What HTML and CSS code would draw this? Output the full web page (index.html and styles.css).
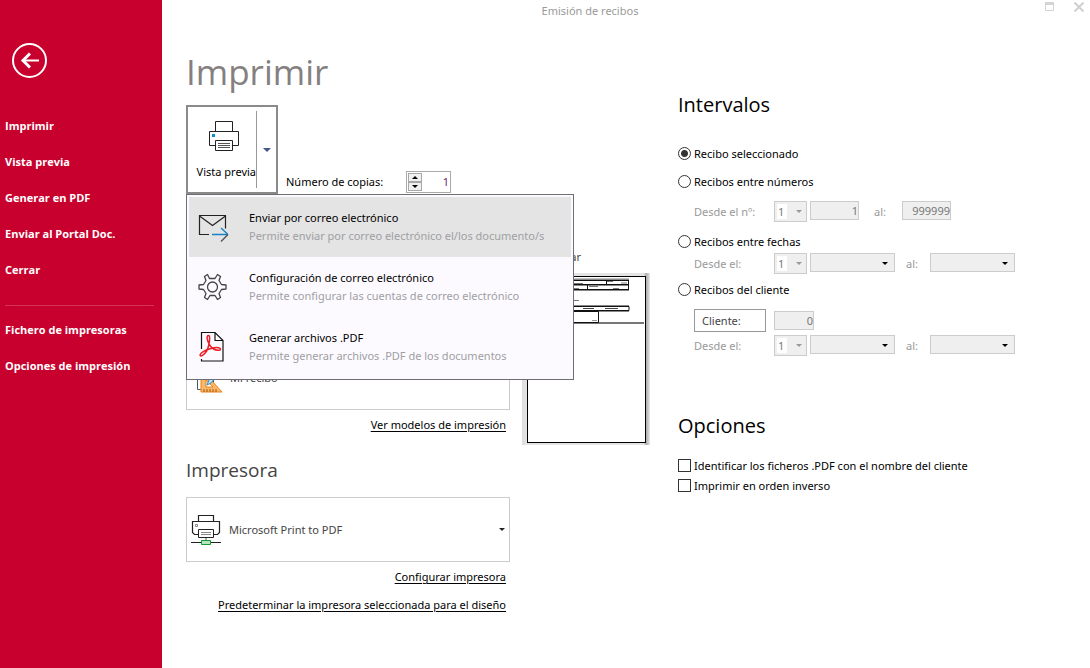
FILE: index.html
```html
<!DOCTYPE html>
<html lang="es">
<head>
<meta charset="utf-8">
<title>Emisión de recibos</title>
<link rel="stylesheet" href="styles.css">
</head>
<body>
<div class="app">
  <nav class="sidebar">
    <button class="back" type="button" aria-label="Volver">
      <svg width="36" height="36" viewBox="0 0 36 36" fill="none" stroke="#fff"><circle cx="17.500" cy="17.500" r="16.500" stroke-width="2"/><path d="M10 17.500H27" stroke-width="2"/><path d="M18 10.500L11 17.500L18 24.500" stroke-width="3"/></svg>
    </button>
    <a class="nav-link" href="#">Imprimir</a>
    <a class="nav-link" href="#">Vista previa</a>
    <a class="nav-link" href="#">Generar en PDF</a>
    <a class="nav-link" href="#">Enviar al Portal Doc.</a>
    <a class="nav-link" href="#">Cerrar</a>
    <hr class="nav-rule">
    <a class="nav-link" href="#">Fichero de impresoras</a>
    <a class="nav-link" href="#">Opciones de impresión</a>
  </nav>

  <div class="window">
    <header class="titlebar">
      <span class="window-title">Emisión de recibos</span>
      <div class="window-buttons">
        <button class="window-button" type="button" aria-label="Maximizar"><svg width="10" height="10" viewBox="0 0 10 10"><path d="M.5 .5h8v8h-8z" fill="none" stroke="#d4d4d4"/><path d="M0 0h9v3H0z" fill="#d4d4d4"/></svg></button>
        <button class="window-button" type="button" aria-label="Cerrar ventana"><svg width="10" height="10" viewBox="0 0 10 10"><path d="M.5 .5l9 9M9.500 .5l-9 9" stroke="#d0d0d0" stroke-width="2"/></svg></button>
      </div>
    </header>

    <main class="content">
      <section class="print">
        <h1 class="page-title">Imprimir</h1>
        <div class="toolbar">
          <div class="split">
            <button class="split-main" type="button">
              <svg width="30" height="31" viewBox="0 0 30 31" fill="none" stroke="#222"><path d="M6.500 10.500V.5h17v10M6.500 24.500H.5v-14h29v14h-6"/><path d="M6.500 19.500h17v10h-17z"/><path d="M9 22.500h12M9 24.500h12M9 26.500h12" stroke="#555"/><path d="M3 13h3v3H3z" fill="#0a8fd0" stroke="none"/></svg>
              <span>Vista previa</span>
            </button>
            <button class="split-toggle" type="button" aria-label="Más opciones"><svg width="8" height="4" viewBox="0 0 8 4"><path d="M0 0h8L4 4z" fill="#44558a"/></svg></button>
          </div>
          <label class="copies-label" for="copies">Número de copias:</label>
          <div class="spinner">
            <div class="spinner-buttons">
              <button class="step" type="button" aria-label="Más"><svg width="6" height="3" viewBox="0 0 6 3"><path d="M3 0l3 3H0z"/></svg></button>
              <button class="step" type="button" aria-label="Menos"><svg width="6" height="3" viewBox="0 0 6 3"><path d="M3 3l3-3H0z"/></svg></button>
            </div>
            <input class="spinner-input" id="copies" type="text" value="1">
          </div>

          <div class="menu" role="menu">
            <button class="menu-item active" type="button" role="menuitem">
              <svg width="32" height="32" viewBox="0 -3 32 32" fill="none" stroke="#222"><path d="M11 20.500H1.500v-19h26v13" stroke-width="1.200"/><path d="M1.500 2l13 9.500L27.500 2" stroke-width="1.200"/><path d="M14 20.500h16M23 14l6.500 6" stroke="#1583c4" stroke-width="1.400"/><path d="M30 20.500l-7 7" stroke="#555" stroke-width="1.400"/></svg>
              <span class="menu-text"><span class="menu-title">Enviar por correo electrónico</span><span class="menu-note">Permite enviar por correo electrónico el/los documento/s</span></span>
            </button>
            <button class="menu-item" type="button" role="menuitem">
              <svg width="32" height="32" viewBox="0 0 32 32" fill="none" stroke="#444" stroke-width="1.300"><circle cx="14.500" cy="16" r="5"/><path d="M11.500 7.500L9.500 3.500L6.500 5.500L8 9.500L5.500 13.500L1 14V18L5.500 18.500L8 22.500L6.500 26.500L9.500 28.500L12 24.500H17L19.500 28.500L22.500 26.500L21 22.500L23.500 18.500L28 18V14L23.500 13.500L21 9.500L22.500 5.500L19.500 3.500L17 7.500Z" stroke-linejoin="round"/></svg>
              <span class="menu-text"><span class="menu-title">Configuración de correo electrónico</span><span class="menu-note">Permite configurar las cuentas de correo electrónico</span></span>
            </button>
            <button class="menu-item" type="button" role="menuitem">
              <svg width="32" height="32" viewBox="0 0 32 32" fill="none" stroke="#111"><path d="M3.500 18V1.500h13.500l8 8v20.500H3.500v-2M17 1.500v8h8" stroke-width="1.200"/><path d="M10.500 4.500C8 4.500 9 10 12 14.500C15 19 19 19.500 22 19C24 17 19 15.500 13 17.500C7 19 2 22 2 24C2.500 26.500 6 24 9 19.500C11 15 13 4.500 10.500 4.500Z" stroke="#ee1c25" stroke-width="1.500"/></svg>
              <span class="menu-text"><span class="menu-title">Generar archivos .PDF</span><span class="menu-note">Permite generar archivos .PDF de los documentos</span></span>
            </button>
          </div>
        </div>

        <button class="picker model" type="button">
          <svg width="26" height="30" viewBox="0 0 26 30"><path d="M.5 .5h16v26H.5z" fill="#fff" stroke="#555"/><path d="M4 6v23h21z" fill="#f9b86a" stroke="#e8811c"/><path d="M9 17v7h7z" fill="#fff" stroke="#e8811c"/><path d="M7 29v-3M10 29v-3M13 29v-3M16 29v-3M19 29v-3" stroke="#a85a10"/><path d="M10 22l2-5 7-9 3 2-8 10z" fill="#bfe3f5" stroke="#2a8cc8"/></svg>
          <span>Mi recibo</span>
        </button>
        <a class="link models-link" href="#">Ver modelos de impresión</a>

        <h2 class="section-title printer-title">Impresora</h2>
        <button class="picker printer" type="button">
          <svg width="30" height="30" viewBox="0 0 30 30" fill="none" stroke="#222"><path d="M7.500 6.500v-6h15v6M7.500 19.500H3.500l-2-2v-11h27v11l-2 2h-4" stroke-width="1.200"/><path d="M7.500 14.500h15v8h-15z"/><path d="M10 17.500h10M10 19.500h10M4.500 9.500h2v2h-2z" stroke="#888"/><path d="M15 23v2" stroke="#aaa" stroke-width="2"/><path d="M0 27.500h30"/><path d="M10.500 25.500h9v4h-9z" fill="#b9e3bd" stroke="#109a38"/></svg>
          <span>Microsoft Print to PDF</span>
          <svg class="picker-arrow" width="6" height="3" viewBox="0 0 6 3"><path d="M0 0h6L3 3z" fill="#222"/></svg>
        </button>
        <a class="link" href="#">Configurar impresora</a>
        <a class="link" href="#">Predeterminar la impresora seleccionada para el diseño</a>
      </section>

      <section class="preview">
        <span class="preview-label">Visualizar</span>
        <div class="sheet-frame">
          <div class="sheet">
            <svg width="117" height="50" viewBox="0 0 117 50" fill="none">
              <path d="M4 2.500h97M4 8h97M4 13h97M4 29h97M4 34h97" stroke="#888" stroke-width="2"/>
              <path d="M4 3.500h97M4 7.500h97M4 12.500h97M4 29.500h97v4H4zM100.500 3v10M78.500 3v5M59.500 8v5" stroke="#111"/>
              <path d="M46 6.500h9M93 6h6M79 4.500h6M61 9.500h9M85 11.500h6M46 11.500h5M46 23.500h5" stroke="#777"/>
              <path d="M55 31.500h11M77 31.500h13" stroke="#444"/>
              <path d="M1 46h115" stroke="#777" stroke-width="2"/><path d="M4 34.500h66.500v11H4" stroke="#111"/><path d="M64 43.500h5" stroke="#999"/>
            </svg>
          </div>
        </div>
      </section>

      <section class="settings">
        <h2 class="section-title">Intervalos</h2>
        <form class="ranges">
          <label class="choice"><input class="radio" type="radio" name="range" checked>Recibo seleccionado</label>
          <label class="choice numbers-choice"><input class="radio" type="radio" name="range">Recibos entre números</label>
          <div class="fields">
            <label class="field-label" for="num-series">Desde el nº:</label>
            <select class="series" id="num-series" disabled><option>1</option></select>
            <input class="box number" type="text" value="1" aria-label="Desde el número" disabled>
            <label class="to" for="num-to">al:</label>
            <input class="box number" id="num-to" type="text" value="999999" disabled>
          </div>
          <label class="choice dates-choice"><input class="radio" type="radio" name="range">Recibos entre fechas</label>
          <div class="fields">
            <label class="field-label" for="date-series">Desde el:</label>
            <select class="series" id="date-series" disabled><option>1</option></select>
            <select class="box date" aria-label="Desde la fecha" disabled><option></option></select>
            <label class="to narrow" for="date-to">al:</label>
            <select class="box date" id="date-to" disabled><option></option></select>
          </div>
          <label class="choice client-choice"><input class="radio" type="radio" name="range">Recibos del cliente</label>
          <div class="fields client">
            <button class="client-button" type="button">Cliente:</button>
            <input class="box client-code" type="text" value="0" aria-label="Código de cliente" disabled>
          </div>
          <div class="fields">
            <label class="field-label" for="client-series">Desde el:</label>
            <select class="series" id="client-series" disabled><option>1</option></select>
            <select class="box date" aria-label="Desde la fecha del cliente" disabled><option></option></select>
            <label class="to narrow" for="client-to">al:</label>
            <select class="box date" id="client-to" disabled><option></option></select>
          </div>
        </form>
        <h2 class="section-title options-title">Opciones</h2>
        <label class="choice option"><input class="check" type="checkbox">Identificar los ficheros .PDF con el nombre del cliente</label>
        <label class="choice option"><input class="check" type="checkbox">Imprimir en orden inverso</label>
      </section>
    </main>
  </div>
</div>
</body>
</html>
```
FILE: styles.css
```css
* { box-sizing: border-box; }
body {
  margin: 0;
  background: #fff;
  color: #000;
  font: 11px/16px "Noto Sans", "Open Sans", sans-serif;
}
button, input, select { font: inherit; color: inherit; margin: 0; padding: 0; border-radius: 0; }
button { background: none; border: 0; cursor: pointer; }
svg { display: block; flex: none; }

.app { display: flex; min-height: 100vh; }

/* Sidebar */
.sidebar {
  flex: none;
  width: 162px;
  padding: 43px 8px 0 5px;
  background: #c8002d;
}
.back { display: block; margin: 0 0 29px 7px; }
.nav-link {
  display: block;
  color: #fff;
  font-family: "Open Sans", sans-serif;
  font-weight: 700;
  line-height: 36px;
  text-decoration: none;
}
.nav-rule { margin: 17px 0 6px; border: 0; border-top: 1px solid #d63358; }

/* Title bar */
.window { flex: 1; min-width: 0; }
.titlebar {
  display: grid;
  grid-template-columns: 1fr 72px;
  align-items: center;
  height: 22px;
}
.window-title { text-align: center; color: #9a9a9a; }
.window-buttons { display: flex; justify-content: flex-end; gap: 19px; padding: 0 6px 8px 0; }

.content {
  display: grid;
  grid-template-columns: 324px 127px minmax(340px, 1fr);
  padding: 0 0 24px 24px;
}

/* Print column */
.print { display: flex; flex-direction: column; align-items: stretch; }
.page-title {
  margin: 25px 0 8px;
  color: #858080;
  font: 400 35px/50px "Open Sans", sans-serif;
}
.toolbar { position: relative; display: flex; align-items: flex-end; height: 89px; }
.split { display: flex; width: 92px; height: 89px; border: 2px solid #8a8a8a; }
.split-main {
  flex: 1;
  display: flex;
  flex-direction: column;
  align-items: flex-end;
  justify-content: space-between;
  margin: 4px 0;
  padding: 10px 0 8px;
  border-right: 1px solid #999;
  white-space: nowrap;
}
.split-main svg { margin-right: 17px; }
.split-toggle { width: 19px; display: flex; align-items: center; justify-content: center; }
.copies-label { width: 128px; padding: 0 0 4px 8px; }
.spinner {
  display: flex;
  width: 45px;
  height: 22px;
  margin-bottom: 1px;
  padding: 1px;
  border: 1px solid #aaa;
}
.spinner-buttons { display: flex; flex-direction: column; flex: none; width: 14px; }
.step {
  flex: 1;
  display: flex;
  align-items: center;
  justify-content: center;
  border: 1px solid #a8a8a8;
  background: #f0f0f0;
}
.spinner-input { width: 100%; min-width: 0; border: 0; background: none; text-align: right; color: #702070; }

.menu {
  position: absolute;
  z-index: 2;
  top: 100%;
  left: 0;
  width: 388px;
  padding: 2px;
  border: 1px solid #6f6e74;
  background: #fcfaff;
}
.menu-item {
  display: flex;
  align-items: center;
  gap: 19px;
  width: 100%;
  height: 60px;
  padding: 0 8px 0 9px;
  text-align: left;
}
.menu-item.active { background: #e4e4e4; }
.menu-text { display: flex; flex-direction: column; gap: 2px; }
.menu-note { color: #a09fa3; }

.picker {
  display: flex;
  align-items: center;
  gap: 8px;
  width: 100%;
  height: 65px;
  padding: 0 4px;
  border: 1px solid #ccc;
  color: #444;
  text-align: left;
}
.model { margin: 151px 0 7px; gap: 7px; padding-left: 10px; }
.picker-arrow { margin-left: auto; }
.link {
  align-self: flex-end;
  margin: 0 4px 12px 0;
  color: #000;
  text-underline-offset: 2px;
}
.printer { margin-bottom: 7px; font-size: 11px; }
.section-title { margin: 0; font: 400 20px/28px "Open Sans", sans-serif; }
.models-link { margin-bottom: 23px; }
.printer-title { margin-bottom: 13px; color: #444; font-size: 19px; }

/* Sheet preview */
.preview { padding: 227px 0 0 12px; width: 139px; }
.preview-label { display: block; width: 59px; text-align: right; color: #444; }
.sheet-frame {
  width: 128px;
  height: 172px;
  margin-top: 8px;
  padding: 3px 4px 2px 5px;
  background: linear-gradient(90deg, #ddd, #e4e4e4 4px, #e4e4e4 122px, #aaa 124px, #e8e8e8);
}
.sheet { height: 167px; border: 1px solid #000; background: #fff; }

/* Settings column */
.settings { padding: 69px 0 0 41px; }
.ranges { padding-top: 27px; }
.choice { display: flex; align-items: flex-start; gap: 3px; height: 16px; }
.radio, .check {
  appearance: none;
  flex: none;
  width: 13px;
  height: 13px;
  margin: 1px 0 0;
  border: 1px solid #333;
  background: #fff;
}
.radio { border-radius: 50%; }
.radio:checked { background: radial-gradient(circle, #333 3px, #fff 4px); }
.numbers-choice { margin: 12px 0 11px; }
.dates-choice { margin: 12px 0 3px; }
.client-choice { margin: 8px 0 11px; }
.fields { display: flex; align-items: flex-start; height: 21px; padding-left: 16px; color: #999; }
.field-label { width: 80px; padding-top: 3px; }
.to { width: 43px; padding: 3px 0 0 15px; }
.to.narrow { width: 35px; padding-left: 11px; }
.box, .series {
  appearance: none;
  height: 19px;
  border: 1px solid #ccc;
  background: #efefef;
  color: #777;
  opacity: 1;
}
.series {
  width: 33px;
  height: 21px;
  margin-right: 3px;
  padding-left: 3px;
  background:
    url("data:image/svg+xml,%3Csvg xmlns='http://www.w3.org/2000/svg' width='6' height='3'%3E%3Cpath d='M0 0h6L3 3z' fill='%23999'/%3E%3C/svg%3E") 21px 8px no-repeat,
    linear-gradient(#fff, #fff) 2px 2px / 10px 15px no-repeat,
    #efefef;
}
.number { width: 49px; text-align: right; }
.date {
  width: 85px;
  background: #efefef url("data:image/svg+xml,%3Csvg xmlns='http://www.w3.org/2000/svg' width='6' height='3'%3E%3Cpath d='M0 0h6L3 3z'/%3E%3C/svg%3E") right 6px top 8px no-repeat;
}
.client { height: 26px; gap: 8px; }
.client-button {
  width: 72px;
  height: 23px;
  padding-left: 7px;
  border: 1px solid #999;
  color: #444;
  text-align: left;
}
.client-code { width: 40px; margin-top: 2px; text-align: right; }
.options-title { margin: 56px 0 18px; }
.option { margin-bottom: 4px; }
```
